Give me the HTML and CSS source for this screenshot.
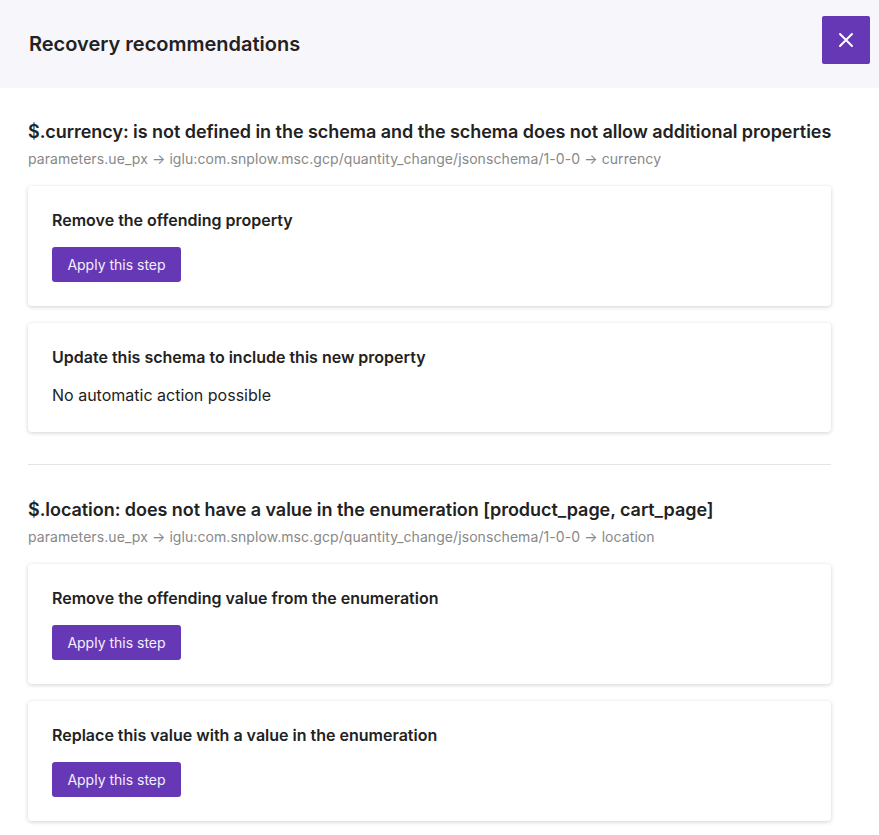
FILE: index.html
```html
<!DOCTYPE html>
<html>
<head>
<meta charset="utf-8">
<link rel="stylesheet" href="styles.css">
</head>
<body>
<div class="modal">
  <header class="modal-header">
    <h1 class="modal-title">Recovery recommendations</h1>
    <button class="close-btn" aria-label="Close">
      <svg width="16" height="16" viewBox="0 0 16 16"><path d="M2 2L14 14M14 2L2 14" stroke="#fff" stroke-width="2" stroke-linecap="round"/></svg>
    </button>
  </header>
  <main class="modal-body">
    <section class="issue">
      <h2 class="issue-title">$.currency: is not defined in the schema and the schema does not allow additional properties</h2>
      <p class="issue-path">parameters.ue_px → iglu:com.snplow.msc.gcp/quantity_change/jsonschema/1-0-0 → currency</p>
      <div class="card">
        <h3 class="card-title">Remove the offending property</h3>
        <button class="apply-btn">Apply this step</button>
      </div>
      <div class="card card-info">
        <h3 class="card-title">Update this schema to include this new property</h3>
        <p class="card-text">No automatic action possible</p>
      </div>
    </section>
    <hr class="divider">
    <section class="issue">
      <h2 class="issue-title">$.location: does not have a value in the enumeration [product_page, cart_page]</h2>
      <p class="issue-path">parameters.ue_px → iglu:com.snplow.msc.gcp/quantity_change/jsonschema/1-0-0 → location</p>
      <div class="card">
        <h3 class="card-title">Remove the offending value from the enumeration</h3>
        <button class="apply-btn">Apply this step</button>
      </div>
      <div class="card">
        <h3 class="card-title">Replace this value with a value in the enumeration</h3>
        <button class="apply-btn">Apply this step</button>
      </div>
    </section>
  </main>
</div>
</body>
</html>
```
FILE: styles.css
```css
* { box-sizing: border-box; }
html, body { margin: 0; padding: 0; background: #fff; }
body { font-family: Inter, "Noto Sans", sans-serif; color: #222; }
.modal { width: 879px; }
.modal-header {
  height: 88px;
  background: #f6f6fb;
  display: flex;
  align-items: center;
  justify-content: space-between;
  padding: 0 9px 0 29px;
}
.modal-title { margin: 0; font-size: 20px; font-weight: 600; color: #222; }
.close-btn {
  width: 48px; height: 48px;
  background: #6638b6;
  border: none; border-radius: 2px;
  display: flex; align-items: center; justify-content: center;
  padding: 0; margin-top: -8px;
}
.modal-body { padding: 32px 48px 0 28px; }
.issue { display: flex; flex-direction: column; }
.issue-title { margin: 0; font-size: 18px; font-weight: 600; line-height: 24px; color: #222; letter-spacing: -0.05px; white-space: nowrap; }
.issue-path { margin: 5px 0 17px; font-size: 14px; line-height: 20px; color: #888; letter-spacing: 0.08px; }
.card {
  background: #fff;
  border-radius: 4px;
  box-shadow: 0 1px 4px rgba(0,0,0,0.18);
  padding: 24px;
  margin-bottom: 17px;
  display: flex; flex-direction: column; align-items: flex-start;
}
.card-info { padding-bottom: 27px; }
.card-title { margin: 0; font-size: 16px; font-weight: 600; line-height: 20px; color: #222; }
.card-text { margin: 18px 0 0; font-size: 16px; line-height: 20px; color: #222; }
.apply-btn {
  margin-top: 17px;
  height: 35px; width: 129px;
  background: #6638b6; color: #f4f0fb;
  border: none; border-radius: 3px;
  font-family: Inter, "Noto Sans", sans-serif;
  font-size: 14px;
}
.divider { border: none; border-top: 1px solid #e4e4e4; margin: 15px 0 33px; }
```
